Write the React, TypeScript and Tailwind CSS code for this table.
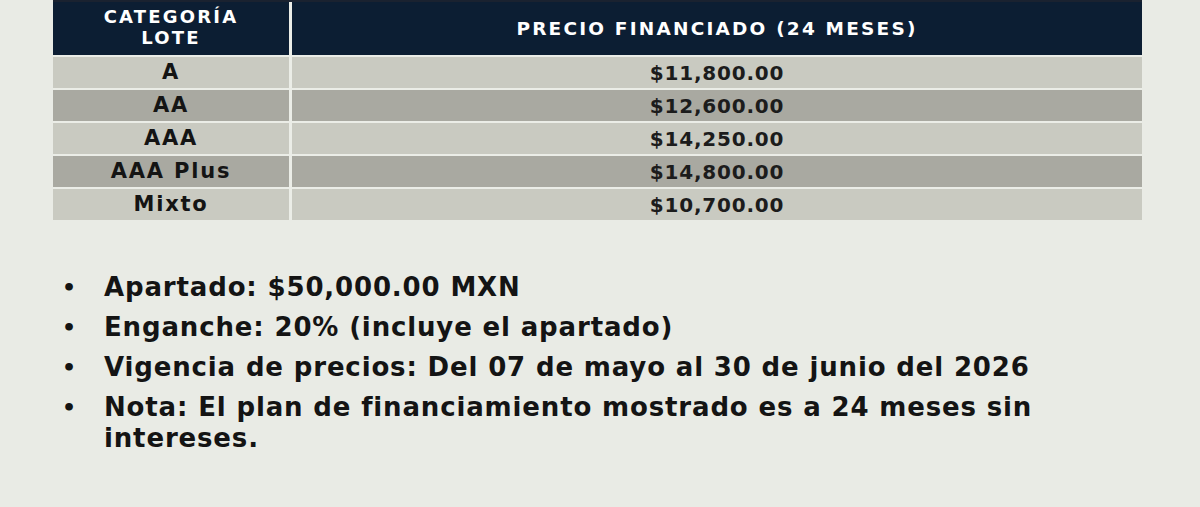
import React from "react";

const rows = [
  { cat: "A", price: "$11,800.00", dark: false },
  { cat: "AA", price: "$12,600.00", dark: true },
  { cat: "AAA", price: "$14,250.00", dark: false },
  { cat: "AAA Plus", price: "$14,800.00", dark: true },
  { cat: "Mixto", price: "$10,700.00", dark: false },
];

export default function App() {
  return (
    <div
      className="w-[1200px] h-[507px] overflow-hidden bg-[#e9ebe5] text-[#141414]"
      style={{ fontFamily: '"DejaVu Sans", "Liberation Sans", sans-serif' }}
    >
      <div className="ml-[53px] w-[1089px] flex flex-col gap-[2px] bg-[#ebede7]">
        <div className="flex gap-[3px] h-[55px] border-t-2 border-[#1a2230]">
          <div className="w-[236px] bg-[#0c1e33] flex items-center justify-center pb-[3px] text-white font-bold text-[18px] leading-[21px] tracking-[2.2px] text-center">
            CATEGORÍA
            <br />
            LOTE
          </div>
          <div className="flex-1 bg-[#0c1e33] flex items-center justify-center text-white font-bold text-[18.5px] tracking-[2.2px]">
            PRECIO FINANCIADO (24 MESES)
          </div>
        </div>
        {rows.map((r) => (
          <div key={r.cat} className="flex gap-[3px] h-[31px]">
            <div
              className={`w-[236px] flex items-center justify-center font-bold text-[21px] tracking-[1.8px] ${
                r.dark ? "bg-[#a9a9a1]" : "bg-[#c9cac1]"
              }`}
            >
              {r.cat}
            </div>
            <div
              className={`flex-1 flex items-center justify-center font-bold text-[20px] tracking-[0.8px] text-[#1c1c1c] ${
                r.dark ? "bg-[#a9a9a1]" : "bg-[#c9cac1]"
              }`}
            >
              {r.price}
            </div>
          </div>
        ))}
      </div>

      <ul className="mt-[52px] ml-[62px] w-[1000px] flex flex-col gap-[9px] text-[26px] leading-[31px] tracking-[0.85px]">
        <li className="flex">
          <span className="w-[42px] shrink-0 font-bold text-[22px]">•</span>
          <span className="font-bold">Apartado: $50,000.00 MXN</span>
        </li>
        <li className="flex">
          <span className="w-[42px] shrink-0 font-bold text-[22px]">•</span>
          <span className="font-semibold">
            <b>Enganche:</b> 20% (incluye el apartado)
          </span>
        </li>
        <li className="flex">
          <span className="w-[42px] shrink-0 font-bold text-[22px]">•</span>
          <span className="font-semibold">
            <b>Vigencia de precios:</b> Del 07 de mayo al 30 de junio del 2026
          </span>
        </li>
        <li className="flex">
          <span className="w-[42px] shrink-0 font-bold text-[22px]">•</span>
          <span className="font-semibold w-[945px]">
            <b>Nota:</b> El plan de financiamiento mostrado es a 24 meses sin intereses.
          </span>
        </li>
      </ul>
    </div>
  );
}
